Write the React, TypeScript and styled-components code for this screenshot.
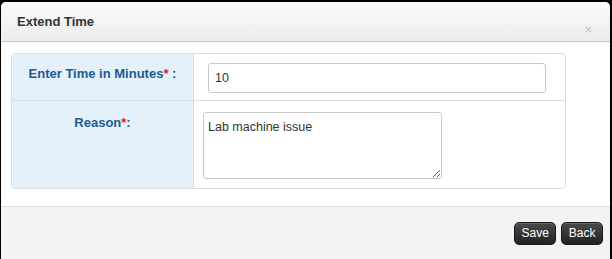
import { createGlobalStyle, styled } from "styled-components";

const GlobalStyle = createGlobalStyle`
  html, body {
    margin: 0;
    padding: 0;
    background: #000;
    font-family: "Liberation Sans", Arial, sans-serif;
  }
`;

const Modal = styled.div`
  margin: 2px 0 0 1px;
  width: 609px;
  height: 257px;
  background: #fff;
  border-radius: 5px 5px 0 0;
  display: flex;
  flex-direction: column;
  overflow: hidden;
`;

const Header = styled.div`
  height: 39px;
  flex: none;
  display: flex;
  align-items: center;
  justify-content: space-between;
  padding: 0 18px 0 16px;
  background: linear-gradient(#fbfbfb, #ececec);
  border-bottom: 1px solid #cfcfcf;
  box-shadow: 0 1px 0 #f4f4f4;
`;

const Title = styled.h3`
  margin: 0 0 1px;
  font-size: 13px;
  font-weight: bold;
  color: #333;
`;

const Close = styled.span`
  margin-top: 16px;
  font-size: 13px;
  color: #bbb;
  line-height: 1;
`;

const Body = styled.div`
  flex: 1;
  padding: 11px 44px 17px 10px;
`;

const FormTable = styled.div`
  border: 1px solid #dcdcdc;
  border-radius: 4px;
  display: grid;
  grid-template-columns: 182px 1fr;
  grid-template-rows: 47px 87px;
  overflow: hidden;
`;

const Label = styled.div<{ $top: number; $last?: boolean }>`
  background: #e4f0fa;
  border-right: 1px solid #dcdcdc;
  border-bottom: ${(p) => (p.$last ? "none" : "1px solid #dcdcdc")};
  text-align: center;
  padding-top: ${(p) => p.$top}px;
  font-size: 13px;
  font-weight: bold;
  color: #1d5a94;
`;

const Star = styled.span`
  color: #e31b1b;
`;

const Cell = styled.div<{ $last?: boolean; $pad: string }>`
  border-bottom: ${(p) => (p.$last ? "none" : "1px solid #dcdcdc")};
  padding: ${(p) => p.$pad};
`;

const TextInput = styled.input`
  box-sizing: border-box;
  width: 338px;
  height: 30px;
  border: 1px solid #c8c8c8;
  border-radius: 3px;
  padding: 0 6px;
  font-family: "Liberation Sans", Arial, sans-serif;
  font-size: 12.5px;
  color: #333;
  outline: none;
`;

const TextArea = styled.textarea`
  box-sizing: border-box;
  width: 239px;
  height: 67px;
  border: 1px solid #c8c8c8;
  border-radius: 3px;
  padding: 7px 4px;
  font-family: "Liberation Sans", Arial, sans-serif;
  font-size: 12.5px;
  color: #333;
  outline: none;
  resize: both;
  display: block;
`;

const Footer = styled.div`
  height: 52px;
  flex: none;
  background: #f3f3f3;
  border-top: 1px solid #dedede;
  display: flex;
  align-items: center;
  justify-content: flex-end;
  gap: 5px;
  padding: 0 7px 0 0;
`;

const Button = styled.button`
  height: 23px;
  padding: 0 6.5px;
  border: 1px solid #1a1a1a;
  border-radius: 5px;
  background: linear-gradient(#4a4a4a, #222);
  color: #fff;
  font-family: "Liberation Sans", Arial, sans-serif;
  font-size: 12px;
  cursor: pointer;
  box-shadow: inset 0 1px 0 rgba(255, 255, 255, 0.15);
`;

export default function App() {
  return (
    <>
      <GlobalStyle />
      <Modal>
        <Header>
          <Title>Extend Time</Title>
          <Close>×</Close>
        </Header>
        <Body>
          <FormTable>
            <Label $top={12}>
              Enter Time in Minutes<Star>*</Star> :
            </Label>
            <Cell $pad="9px 0 0 14px">
              <TextInput defaultValue="10" />
            </Cell>
            <Label $top={14} $last>
              Reason<Star>*</Star>:
            </Label>
            <Cell $last $pad="11px 0 0 9px">
              <TextArea defaultValue="Lab machine issue" />
            </Cell>
          </FormTable>
        </Body>
        <Footer>
          <Button>Save</Button>
          <Button>Back</Button>
        </Footer>
      </Modal>
    </>
  );
}
